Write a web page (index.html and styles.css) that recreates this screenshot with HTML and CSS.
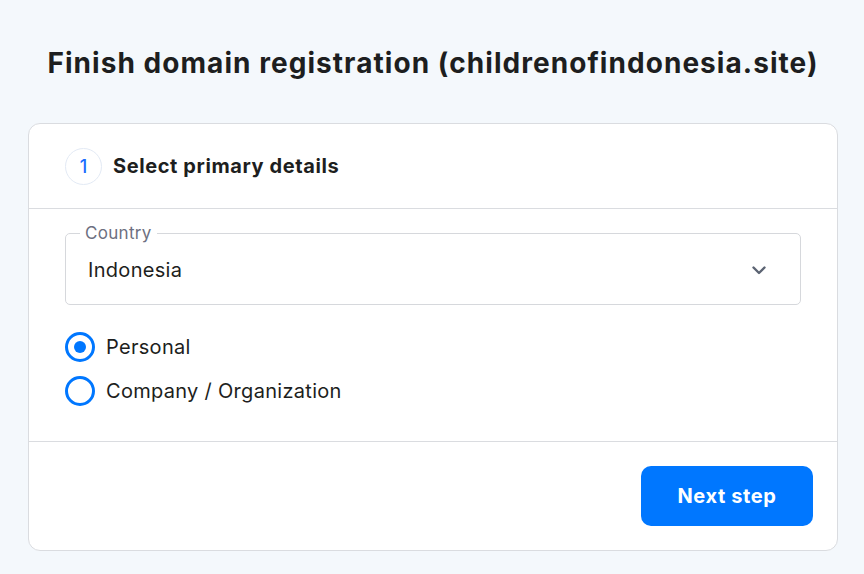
FILE: index.html
```html
<!DOCTYPE html>
<html>
<head>
<meta charset="utf-8">
<link rel="stylesheet" href="styles.css">
</head>
<body>
<main class="page">
  <h1 class="title">Finish domain registration (childrenofindonesia.site)</h1>
  <section class="card">
    <div class="card-head">
      <span class="step">1</span>
      <span class="step-title">Select primary details</span>
    </div>
    <div class="card-body">
      <fieldset class="field">
        <legend class="legend">Country</legend>
        <div class="select">
          <span class="select-value">Indonesia</span>
          <svg class="chevron" width="20" height="20" viewBox="0 0 20 20"><path d="M4.5 7.5 L10 13 L15.5 7.5" fill="none" stroke="#5c6473" stroke-width="2.4" stroke-linecap="round" stroke-linejoin="round"/></svg>
        </div>
      </fieldset>
      <div class="radios">
        <label class="radio"><span class="dot checked"></span><span class="radio-label">Personal</span></label>
        <label class="radio"><span class="dot"></span><span class="radio-label">Company / Organization</span></label>
      </div>
    </div>
    <div class="card-foot">
      <button class="btn">Next step</button>
    </div>
  </section>
</main>
</body>
</html>
```

FILE: styles.css
```css
* { box-sizing: border-box; }
html, body { margin: 0; padding: 0; }
body {
  background: #f4f8fc;
  font-family: Inter, "Noto Sans", sans-serif;
  color: #1d1e20;
  width: 864px;
  height: 574px;
  overflow: hidden;
}
.page {
  padding: 44px 26px 0 28px;
}
.title {
  margin: 0 0 41px 0;
  text-align: center;
  font-size: 28px;
  font-weight: 700;
  line-height: 38px;
  letter-spacing: 1.05px;
  color: #1d1e20;
}
.card {
  width: 810px;
  background: #fff;
  border: 1px solid #dadce0;
  border-radius: 12px;
}
.card-head {
  height: 85px;
  display: flex;
  align-items: center;
  padding-left: 36px;
  gap: 11px;
  border-bottom: 1px solid #dadce0;
}
.step {
  width: 37px;
  height: 37px;
  border-radius: 50%;
  border: 1px solid #e3eaf5;
  display: flex;
  align-items: center;
  justify-content: center;
  color: #1a6dff;
  font-size: 18px;
  font-weight: 500;
}
.step-title {
  font-size: 20px;
  font-weight: 700;
  letter-spacing: 0.6px;
  color: #1d1e20;
}
.card-body {
  padding: 15px 36px 35px 36px;
  border-bottom: 1px solid #dadce0;
}
.field {
  margin: 0;
  padding: 0;
  border: 1px solid #d6d8dc;
  border-radius: 5px;
  height: 81px;
}
.legend {
  margin-left: 14px;
  padding: 0 5px;
  font-size: 17px;
  letter-spacing: 0.3px;
  color: #6d7081;
  line-height: 18px;
}
.select {
  display: flex;
  align-items: center;
  justify-content: space-between;
  padding: 4px 31px 0 22px;
  height: 52px;
}
.select-value {
  font-size: 20px;
  letter-spacing: 0.3px;
  color: #1d1e20;
}
.chevron { display: block; }
.radios {
  margin-top: 27px;
  display: flex;
  flex-direction: column;
  gap: 14px;
}
.radio {
  display: flex;
  align-items: center;
  gap: 11px;
  height: 30px;
}
.dot {
  width: 30px;
  height: 30px;
  border-radius: 50%;
  border: 3px solid #0077ff;
  display: flex;
  align-items: center;
  justify-content: center;
}
.dot.checked::after {
  content: "";
  width: 12px;
  height: 12px;
  border-radius: 50%;
  background: #0077ff;
}
.radio-label {
  font-size: 20px;
  letter-spacing: 0.3px;
  color: #1d1e20;
}
.card-foot {
  display: flex;
  justify-content: flex-end;
  padding: 24px 24px 24px 0;
}
.btn {
  width: 172px;
  height: 60px;
  border: none;
  border-radius: 10px;
  background: #0077ff;
  color: #fff;
  font-family: Inter, "Noto Sans", sans-serif;
  font-size: 20px;
  font-weight: 700;
  letter-spacing: 0.6px;
}
```
